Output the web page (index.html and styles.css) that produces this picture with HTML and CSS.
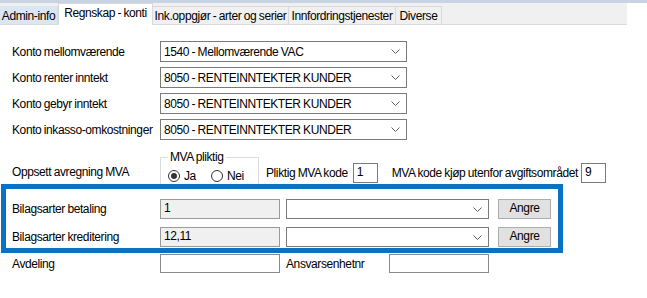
FILE: index.html
```html
<!DOCTYPE html>
<html>
<head>
<meta charset="utf-8">
<link rel="stylesheet" href="styles.css">
</head>
<body>
<div class="topstrip"></div>
<div class="tabbar">
  <div class="tab tab-hover">Admin-info</div>
  <div class="tab tab-active">Regnskap - konti</div>
  <div class="tab">Ink.oppgjør - arter og serier</div>
  <div class="tab">Innfordringstjenester</div>
  <div class="tab">Diverse</div>
</div>
<div class="form">
  <div class="row first">
    <div class="label">Konto mellomværende</div>
    <div class="combo wide"><span>1540 - Mellomværende VAC</span><svg class="chev" width="9" height="5" viewBox="0 0 9 5"><polyline points="0.5,0.5 4.5,4.5 8.5,0.5" fill="none" stroke="#5f5f5f" stroke-width="1"/></svg></div>
  </div>
  <div class="row">
    <div class="label">Konto renter inntekt</div>
    <div class="combo wide"><span>8050 - RENTEINNTEKTER KUNDER</span><svg class="chev" width="9" height="5" viewBox="0 0 9 5"><polyline points="0.5,0.5 4.5,4.5 8.5,0.5" fill="none" stroke="#5f5f5f" stroke-width="1"/></svg></div>
  </div>
  <div class="row">
    <div class="label">Konto gebyr inntekt</div>
    <div class="combo wide"><span>8050 - RENTEINNTEKTER KUNDER</span><svg class="chev" width="9" height="5" viewBox="0 0 9 5"><polyline points="0.5,0.5 4.5,4.5 8.5,0.5" fill="none" stroke="#5f5f5f" stroke-width="1"/></svg></div>
  </div>
  <div class="row">
    <div class="label">Konto inkasso-omkostninger</div>
    <div class="combo wide"><span>8050 - RENTEINNTEKTER KUNDER</span><svg class="chev" width="9" height="5" viewBox="0 0 9 5"><polyline points="0.5,0.5 4.5,4.5 8.5,0.5" fill="none" stroke="#5f5f5f" stroke-width="1"/></svg></div>
  </div>

  <div class="mva-row">
    <div class="label mva-label">Oppsett avregning MVA</div>
    <fieldset class="group">
      <legend>MVA pliktig</legend>
      <div class="radios">
        <span class="radio checked"></span><span class="rtext">Ja</span>
        <span class="radio"></span><span class="rtext last">Nei</span>
      </div>
    </fieldset>
    <div class="inline-label pliktig">Pliktig MVA kode</div>
    <div class="textbox small">1</div>
    <div class="inline-label utenfor">MVA kode kjøp utenfor avgiftsområdet</div>
    <div class="textbox small">9</div>
  </div>

  <div class="row bilag first-bilag">
    <div class="label">Bilagsarter betaling</div>
    <div class="textbox readonly">1</div>
    <div class="combo mid"><span></span><svg class="chev" width="9" height="5" viewBox="0 0 9 5"><polyline points="0.5,0.5 4.5,4.5 8.5,0.5" fill="none" stroke="#5f5f5f" stroke-width="1"/></svg></div>
    <div class="button">Angre</div>
  </div>
  <div class="row bilag second-bilag">
    <div class="label">Bilagsarter kreditering</div>
    <div class="textbox readonly">12,11</div>
    <div class="combo mid"><span></span><svg class="chev" width="9" height="5" viewBox="0 0 9 5"><polyline points="0.5,0.5 4.5,4.5 8.5,0.5" fill="none" stroke="#5f5f5f" stroke-width="1"/></svg></div>
    <div class="button">Angre</div>
  </div>
  <div class="row avd">
    <div class="label">Avdeling</div>
    <div class="textbox plain"></div>
    <div class="inline-label ansvar">Ansvarsenhetnr</div>
    <div class="textbox plain short"></div>
  </div>
</div>
<div class="highlight"></div>
</body>
</html>
```

FILE: styles.css
```css
html, body {
  margin: 0;
  padding: 0;
  background: #ffffff;
}
body {
  width: 647px;
  height: 298px;
  overflow: hidden;
  position: relative;
  font-family: "Liberation Sans", Arial, sans-serif;
  font-size: 12px;
  letter-spacing: -0.4px;
  word-spacing: -0.5px;
  color: #000000;
}
.topstrip {
  height: 3px;
  background: #c9d3e2;
}
.tabbar {
  width: 627px;
  height: 21px;
  background: #f0f0f0;
  border-bottom: 1px solid #dadada;
  display: flex;
  align-items: flex-end;
}
.tab {
  box-sizing: border-box;
  height: 19px;
  line-height: 18px;
  border-right: 1px solid #d9d9d9;
  border-top: 1px solid #d9d9d9;
  white-space: nowrap;
  text-align: center;
  position: relative;
  top: 1px;
  flex: none;
}
.tab-hover {
  width: 58px;
  background: #d9e6f3;
  border-top: none;
  line-height: 20px;
  height: 18px;
  top: 0;
}
.tab-active {
  width: 95px;
  height: 22px;
  background: #ffffff;
  border: 1px solid #d9d9d9;
  border-bottom: none;
  line-height: 19px;
  top: 1px;
}
.tab:nth-child(3) { width: 136px; }
.tab:nth-child(4) { width: 107px; }
.tab:nth-child(5) { width: 46px; }

.form {
  padding-left: 12px;
  display: flex;
  flex-direction: column;
}
.row {
  display: flex;
  align-items: center;
  height: 21px;
  margin-top: 5px;
}
.row.first { margin-top: 16px; }
.label {
  width: 148px;
  flex: none;
  white-space: nowrap;
}
.combo {
  box-sizing: border-box;
  height: 21px;
  border: 1px solid #7a7a7a;
  background: #ffffff;
  display: flex;
  align-items: center;
  justify-content: space-between;
  padding: 0 6px 0 3px;
  flex: none;
}
.combo.wide { width: 247px; }
.combo.mid { width: 203px; height: 20px; margin-left: 6px; }
.chev { flex: none; }

.mva-row {
  display: flex;
  align-items: flex-end;
  margin-top: 10px;
  padding-bottom: 4px;
  box-sizing: border-box;
  height: 37px;
}
.mva-label { padding-bottom: 4px; }
.group {
  align-self: flex-start;
  box-sizing: border-box;
  width: 99px;
  min-width: 0;
  height: 37px;
  margin: 0 0 -4px 0;
  padding: 0 6px 0 7px;
  border: 1px solid #dcdcdc;
  flex: none;
}
.group legend {
  padding: 0 2px;
  margin-left: 0;
  line-height: 14px;
}
.radios {
  display: flex;
  align-items: center;
  height: 18px;
  margin-top: 3px;
}
.radio {
  box-sizing: border-box;
  width: 12px;
  height: 12px;
  border: 1px solid #333333;
  border-radius: 50%;
  position: relative;
  flex: none;
}
.radio.checked::after {
  content: "";
  position: absolute;
  left: 2px;
  top: 2px;
  width: 6px;
  height: 6px;
  border-radius: 50%;
  background: #333333;
}
.rtext { margin-left: 4px; margin-right: 15px; }
.rtext.last { margin-right: 0; }
.inline-label { white-space: nowrap; padding-bottom: 3px; flex: none; }
.pliktig { margin-left: 7px; margin-right: 5px; }
.utenfor { margin-left: 14px; margin-right: 3px; }
.textbox {
  box-sizing: border-box;
  border: 1px solid #7a7a7a;
  background: #ffffff;
  padding: 0 3px;
  line-height: 17px;
  flex: none;
}
.textbox.small { width: 25px; height: 20px; }
.textbox.readonly {
  width: 120px;
  height: 20px;
  background: #f0f0f0;
  border-color: #9a9a9a;
}
.button {
  box-sizing: border-box;
  width: 53px;
  height: 20px;
  margin-left: 9px;
  background: #e1e1e1;
  border: 1px solid #adadad;
  text-align: center;
  line-height: 17px;
  flex: none;
}
.row.bilag { height: 20px; }
.row.first-bilag { margin-top: 12px; }
.row.second-bilag { margin-top: 8px; }
.row.avd { height: 19px; margin-top: 7px; }
.textbox.plain { width: 120px; height: 19px; border-color: #8a8a8a; }
.textbox.short { width: 100px; }
.inline-label.ansvar { width: 103px; margin-left: 6px; padding-bottom: 0; }

.highlight {
  position: absolute;
  left: 1px;
  top: 184px;
  width: 562px;
  height: 69px;
  box-sizing: border-box;
  border: 5px solid #0a71c3;
}
```
